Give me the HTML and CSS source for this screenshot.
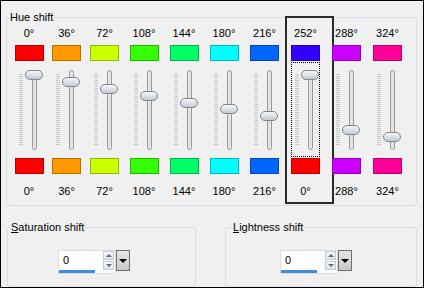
FILE: index.html
```html
<!DOCTYPE html>
<html lang="en">
<head>
    <meta charset="UTF-8">
    <title>Hue shift</title>
    <link rel="stylesheet" href="styles.css">
</head>
<body>
    <fieldset class="group hue-group">
        <legend>Hue shift</legend>
        <div class="hue-row">
            <div class="hue-col">
                <span class="deg">0°</span>
                <span class="swatch h0"></span>
                <div class="slider"><span class="ticks"></span><span class="track"></span><span class="thumb" style="top:8px"></span></div>
                <span class="swatch h0"></span>
                <span class="deg">0°</span>
            </div>
            <div class="hue-col">
                <span class="deg">36°</span>
                <span class="swatch h36"></span>
                <div class="slider"><span class="ticks"></span><span class="track"></span><span class="thumb" style="top:15px"></span></div>
                <span class="swatch h36"></span>
                <span class="deg">36°</span>
            </div>
            <div class="hue-col">
                <span class="deg">72°</span>
                <span class="swatch h72"></span>
                <div class="slider"><span class="ticks"></span><span class="track"></span><span class="thumb" style="top:22px"></span></div>
                <span class="swatch h72"></span>
                <span class="deg">72°</span>
            </div>
            <div class="hue-col">
                <span class="deg">108°</span>
                <span class="swatch h108"></span>
                <div class="slider"><span class="ticks"></span><span class="track"></span><span class="thumb" style="top:29px"></span></div>
                <span class="swatch h108"></span>
                <span class="deg">108°</span>
            </div>
            <div class="hue-col">
                <span class="deg">144°</span>
                <span class="swatch h144"></span>
                <div class="slider"><span class="ticks"></span><span class="track"></span><span class="thumb" style="top:36px"></span></div>
                <span class="swatch h144"></span>
                <span class="deg">144°</span>
            </div>
            <div class="hue-col">
                <span class="deg">180°</span>
                <span class="swatch h180"></span>
                <div class="slider"><span class="ticks"></span><span class="track"></span><span class="thumb" style="top:42px"></span></div>
                <span class="swatch h180"></span>
                <span class="deg">180°</span>
            </div>
            <div class="hue-col">
                <span class="deg">216°</span>
                <span class="swatch h216"></span>
                <div class="slider"><span class="ticks"></span><span class="track"></span><span class="thumb" style="top:49px"></span></div>
                <span class="swatch h216"></span>
                <span class="deg">216°</span>
            </div>
            <div class="hue-col selected">
                <span class="deg">252°</span>
                <span class="swatch h252"></span>
                <div class="slider focus"><span class="ticks"></span><span class="track"></span><span class="thumb" style="top:8px"></span></div>
                <span class="swatch h0"></span>
                <span class="deg">0°</span>
            </div>
            <div class="hue-col">
                <span class="deg">288°</span>
                <span class="swatch h288"></span>
                <div class="slider"><span class="ticks"></span><span class="track"></span><span class="thumb" style="top:63px"></span></div>
                <span class="swatch h288"></span>
                <span class="deg">288°</span>
            </div>
            <div class="hue-col">
                <span class="deg">324°</span>
                <span class="swatch h324"></span>
                <div class="slider"><span class="ticks"></span><span class="track"></span><span class="thumb" style="top:70px"></span></div>
                <span class="swatch h324"></span>
                <span class="deg">324°</span>
            </div>
        </div>
    </fieldset>

    <div class="bottom-row">
        <fieldset class="group sat-group">
            <legend><u>S</u>aturation shift</legend>
            <div class="spinner">
                <div class="spin-field">
                    <div class="spin-top">
                        <span class="spin-value">0</span>
                        <span class="spin-arrows">
                            <span class="spin-btn up"></span>
                            <span class="spin-btn down"></span>
                        </span>
                    </div>
                    <span class="spin-bar"></span>
                </div>
                <span class="spin-drop"></span>
            </div>
        </fieldset>

        <fieldset class="group light-group">
            <legend><u>L</u>ightness shift</legend>
            <div class="spinner">
                <div class="spin-field">
                    <div class="spin-top">
                        <span class="spin-value">0</span>
                        <span class="spin-arrows">
                            <span class="spin-btn up"></span>
                            <span class="spin-btn down"></span>
                        </span>
                    </div>
                    <span class="spin-bar"></span>
                </div>
                <span class="spin-drop"></span>
            </div>
        </fieldset>
    </div>
</body>
</html>
```

FILE: styles.css
```css
* {
    box-sizing: border-box;
}

body {
    margin: 0;
    width: 424px;
    height: 288px;
    overflow: hidden;
    border: 1px solid #000;
    background-color: #f0f0f0;
    font-family: "Liberation Sans", Arial, sans-serif;
    font-size: 11px;
    color: #000;
}

.group {
    margin: 0;
    padding: 0;
    border: 1px solid #d5dfe5;
    border-radius: 3px;
}

.group legend {
    margin-left: 2px;
    padding: 0 1px;
    line-height: 13px;
}

.hue-group {
    margin: 10px 0 0 5px;
    width: 411px;
    padding-bottom: 7px;
}

.hue-row {
    display: grid;
    grid-template-columns: 38px 37px 39px 40px 40px 40px 41px 41px 41px 41px;
    padding: 3px 0 0 3px;
}

.hue-col {
    position: relative;
    display: flex;
    flex-direction: column;
    align-items: center;
}

.hue-col.selected::after {
    content: "";
    position: absolute;
    left: 0;
    top: -11px;
    width: 45px;
    bottom: -6px;
    border: 2px solid #2b2b2b;
}

.deg {
    display: block;
    height: 13px;
    line-height: 13px;
    white-space: nowrap;
}

.swatch {
    display: block;
    width: 29px;
    height: 16px;
    margin-top: 5px;
    border: 1px solid rgba(0, 0, 0, 0.28);
}

.slider + .swatch {
    margin-top: 1px;
}

.slider + .swatch + .deg {
    margin-top: 11px;
}

.h0 { background-color: #ff0000; }
.h36 { background-color: #ff9900; }
.h72 { background-color: #ccff00; }
.h108 { background-color: #33ff00; }
.h144 { background-color: #00ff66; }
.h180 { background-color: #00ffff; }
.h216 { background-color: #0066ff; }
.h252 { background-color: #3300ff; }
.h288 { background-color: #cc00ff; }
.h324 { background-color: #ff0099; }

.slider {
    position: relative;
    width: 29px;
    height: 95px;
    margin-top: 1px;
}

.slider.focus {
    outline: 1px dotted #000;
    outline-offset: -1px;
}

.ticks {
    position: absolute;
    left: 4px;
    top: 12px;
    width: 4px;
    height: 72px;
    background: repeating-linear-gradient(to bottom, #c9c9c9 0, #c9c9c9 1px, transparent 1px, transparent 2px);
}

.track {
    position: absolute;
    left: 17px;
    top: 8px;
    width: 5px;
    height: 80px;
    border: 1px solid #9a9a9a;
    border-radius: 3px;
    background-color: #e4e4e4;
}

.thumb {
    position: absolute;
    left: 10px;
    width: 18px;
    height: 10px;
    border: 1px solid #7c8690;
    border-radius: 5px;
    background: linear-gradient(to bottom, #f6f8fa 0%, #dde2e7 50%, #c3cad2 100%);
}

.bottom-row {
    display: flex;
    margin-top: 15px;
}

.sat-group {
    margin-left: 6px;
    width: 189px;
    height: 66px;
    padding-top: 16px;
}

.sat-group .spinner {
    margin-left: 50px;
}

.light-group {
    margin-left: 29px;
    width: 192px;
    height: 66px;
    padding-top: 16px;
}

.light-group legend {
    margin-left: 6px;
}

.light-group .spinner {
    margin-left: 54px;
}

.spinner {
    display: flex;
    align-items: flex-start;
}

.spin-field {
    display: flex;
    flex-direction: column;
    width: 58px;
    height: 24px;
    border: 1px solid #dcdcdc;
    background-color: #fff;
}

.spin-top {
    display: flex;
    height: 19px;
}

.spin-value {
    flex: 1;
    padding-left: 4px;
    line-height: 18px;
}

.spin-arrows {
    display: flex;
    flex-direction: column;
    gap: 1px;
    margin-right: 1px;
}

.spin-btn {
    position: relative;
    display: block;
    width: 11px;
    height: 9px;
    border: 1px solid #c5ccd4;
    background: linear-gradient(to bottom, #f4f6f8, #dfe4ea);
}

.spin-btn::after {
    content: "";
    position: absolute;
    left: 2px;
    top: 2px;
    border-left: 3px solid transparent;
    border-right: 3px solid transparent;
}

.spin-btn.up::after {
    border-bottom: 3px solid #5b6e88;
}

.spin-btn.down::after {
    border-top: 3px solid #5b6e88;
}

.spin-bar {
    display: block;
    width: 36px;
    height: 3px;
    background-color: #3d8ee0;
}

.spin-drop {
    position: relative;
    display: block;
    width: 14px;
    height: 21px;
    border: 1px solid #6f6f6f;
    background: linear-gradient(to bottom, #e6e6e6, #c9c9c9);
}

.spin-drop::after {
    content: "";
    position: absolute;
    left: 2px;
    top: 8px;
    border-left: 4px solid transparent;
    border-right: 4px solid transparent;
    border-top: 4px solid #000;
}
```
